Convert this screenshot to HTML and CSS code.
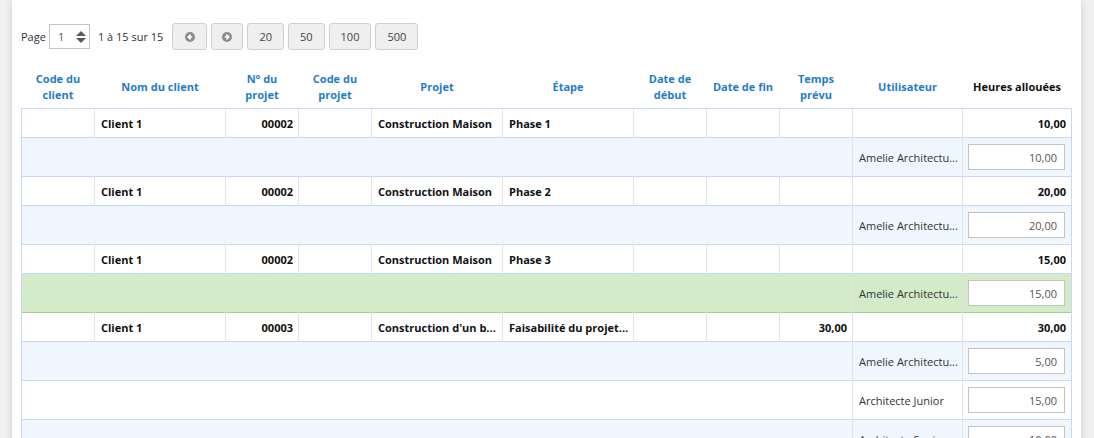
FILE: index.html
```html
<!DOCTYPE html>
<html>
    <head>
    <meta charset="utf-8">
    <link rel="stylesheet" href="styles.css">
    </head>
    <body>
        <div class="panel">

            <div class="toolbar">
                <span class="label">Page</span>
                <div class="page-input">
                    <span>1</span>
                    <svg class="spinner" width="10" height="14" viewBox="0 0 10 14">
                        <polygon points="0,6 5,1 10,6" fill="#5a5a5a"/>
                        <polygon points="0,8 5,13 10,8" fill="#5a5a5a"/>
                    </svg>
                </div>
                <span class="count">1 à 15 sur 15</span>
                <div class="buttons">
                    <button class="btn btn-icon">
                        <svg width="10" height="10" viewBox="0 0 10 10">
                            <circle cx="5" cy="5" r="5" fill="#8c8c8c"/>
                            <path d="M5.6 2.6 L3.2 5 L5.6 7.4 M3.4 5 H7.2" stroke="#fff" stroke-width="1.5" fill="none"/>
                        </svg>
                    </button>
                    <button class="btn btn-icon">
                        <svg width="10" height="10" viewBox="0 0 10 10">
                            <circle cx="5" cy="5" r="5" fill="#8c8c8c"/>
                            <path d="M4.4 2.6 L6.8 5 L4.4 7.4 M6.6 5 H2.8" stroke="#fff" stroke-width="1.5" fill="none"/>
                        </svg>
                    </button>
                    <button class="btn">20</button>
                    <button class="btn">50</button>
                    <button class="btn">100</button>
                    <button class="btn">500</button>
                </div>
            </div>

            <table class="grid">
                <colgroup>
                    <col style="width:73px"><col style="width:131px"><col style="width:73px">
                    <col style="width:73px"><col style="width:131px"><col style="width:131px">
                    <col style="width:73px"><col style="width:73px"><col style="width:73px">
                    <col style="width:110px"><col style="width:109px">
                </colgroup>
                <thead>
                    <tr>
                        <th>Code du<br>client</th>
                        <th>Nom du client</th>
                        <th>N° du<br>projet</th>
                        <th>Code du<br>projet</th>
                        <th>Projet</th>
                        <th>Étape</th>
                        <th>Date de<br>début</th>
                        <th>Date de fin</th>
                        <th>Temps<br>prévu</th>
                        <th>Utilisateur</th>
                        <th class="dark">Heures allouées</th>
                    </tr>
                </thead>
                <tbody>
                    <tr class="parent">
                        <td></td><td>Client 1</td><td class="num">00002</td><td></td>
                        <td>Construction Maison</td><td>Phase 1</td><td></td><td></td><td></td><td></td>
                        <td class="num">10,00</td>
                    </tr>
                    <tr class="child">
                        <td colspan="9"></td><td class="user">Amelie Architectu...</td>
                        <td class="hours"><input type="text" value="10,00"></td>
                    </tr>
                    <tr class="parent">
                        <td></td><td>Client 1</td><td class="num">00002</td><td></td>
                        <td>Construction Maison</td><td>Phase 2</td><td></td><td></td><td></td><td></td>
                        <td class="num">20,00</td>
                    </tr>
                    <tr class="child">
                        <td colspan="9"></td><td class="user">Amelie Architectu...</td>
                        <td class="hours"><input type="text" value="20,00"></td>
                    </tr>
                    <tr class="parent">
                        <td></td><td>Client 1</td><td class="num">00002</td><td></td>
                        <td>Construction Maison</td><td>Phase 3</td><td></td><td></td><td></td><td></td>
                        <td class="num">15,00</td>
                    </tr>
                    <tr class="child selected">
                        <td colspan="9"></td><td class="user">Amelie Architectu...</td>
                        <td class="hours"><input type="text" value="15,00"></td>
                    </tr>
                    <tr class="parent">
                        <td></td><td>Client 1</td><td class="num">00003</td><td></td>
                        <td>Construction d'un b...</td><td>Faisabilité du projet...</td><td></td><td></td>
                        <td class="num">30,00</td><td></td>
                        <td class="num">30,00</td>
                    </tr>
                    <tr class="child">
                        <td colspan="9"></td><td class="user">Amelie Architectu...</td>
                        <td class="hours"><input type="text" value="5,00"></td>
                    </tr>
                    <tr class="child odd">
                        <td colspan="9"></td><td class="user">Architecte Junior</td>
                        <td class="hours"><input type="text" value="15,00"></td>
                    </tr>
                    <tr class="child">
                        <td colspan="9"></td><td class="user">Architecte Senior</td>
                        <td class="hours"><input type="text" value="10,00"></td>
                    </tr>
                </tbody>
            </table>

        </div>
    </body>
</html>
```

FILE: styles.css
```css
html, body {
  margin: 0;
  height: 438px;
  overflow: hidden;
}
body {
  background-color: #f1f1f1;
  font-family: "Open Sans", "Liberation Sans", sans-serif;
  font-size: 11px;
  color: #333;
}
.panel {
  margin-left: 12px;
  width: 1050px;
  height: 460px;
  padding: 23px 10px 0 9px;
  background-color: white;
  box-shadow: 0 0 8px rgba(0,0,0,0.14);
}

.toolbar {
  display: flex;
  align-items: center;
  height: 27px;
  margin-bottom: 15px;
}
.label {
  margin-right: 3px;
}
.page-input {
  display: flex;
  align-items: center;
  justify-content: space-between;
  width: 41px;
  height: 25px;
  box-sizing: border-box;
  padding: 0 3px 0 8px;
  border: 1px solid #c4c4c4;
  color: #555;
}
.count {
  margin-left: 8px;
}
.buttons {
  display: flex;
  gap: 4px;
  margin-left: 9px;
}
.btn {
  height: 27px;
  padding: 0 11px;
  border: 1px solid #cfcfcf;
  border-radius: 3px;
  background-color: #efefef;
  font-family: inherit;
  font-size: 11px;
  color: #444;
}
.btn-icon {
  display: flex;
  align-items: center;
  padding: 0 11px 0 12px;
}
.btn-icon + .btn-icon {
  padding: 0 10px;
}

.grid {
  width: 1050px;
  table-layout: fixed;
  border-collapse: collapse;
}
.grid th {
  height: 43px;
  padding: 0 2px;
  line-height: 16px;
  font-weight: bold;
  color: #1f7dc8;
  text-align: center;
  vertical-align: middle;
  border-bottom: 1px solid #c9d7f7;
}
.grid th.dark {
  color: #111;
}
.grid td {
  padding: 0 6px;
  white-space: nowrap;
  overflow: hidden;
  border-left: 1px solid #e4e4e4;
}
.grid td:first-child {
  border-left: 1px solid #c9d7f7;
}
.grid td:last-child {
  border-right: 1px solid #c9d7f7;
}
.grid tr {
  border-bottom: 1px solid #c9d7f7;
}

.parent td {
  height: 28px;
  font-weight: bold;
  color: #111;
  background-color: white;
}
.parent td.num {
  text-align: right;
  padding-right: 5px;
}

.child td {
  height: 38px;
  background-color: #eff6fe;
}
.child.odd td {
  background-color: white;
}
.child.selected {
  border-bottom: 1px solid #a2d18f;
}
.child.selected td {
  background-color: #d3ebc8;
}
.child td.user {
  color: #333;
}
.child td.hours {
  padding: 0 5px 0 5px;
}
.hours input {
  display: block;
  width: 97px;
  height: 26px;
  box-sizing: border-box;
  padding: 0 7px;
  border: 1px solid #c3c3c3;
  background-color: white;
  font-family: inherit;
  font-size: 11px;
  color: #555;
  text-align: right;
}
```
